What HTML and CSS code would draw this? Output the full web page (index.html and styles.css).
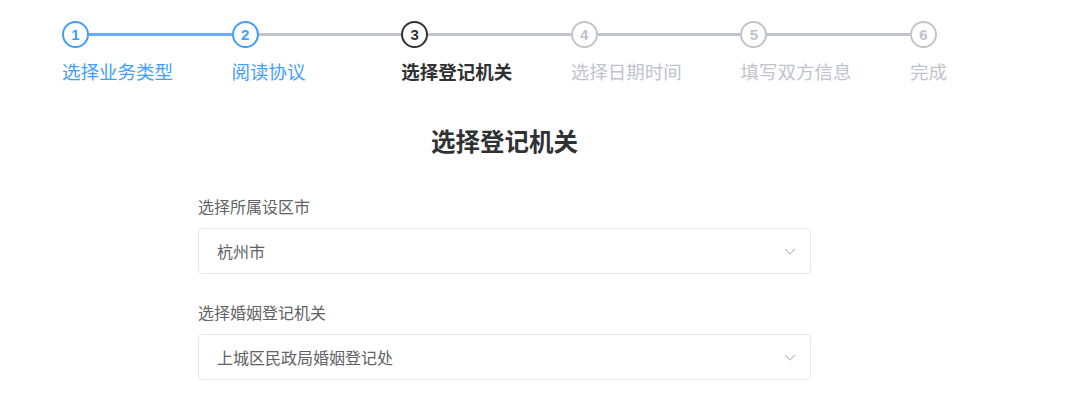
FILE: index.html
```html
<!DOCTYPE html>
<html lang="zh-CN">
    <head>
        <meta charset="UTF-8">
        <meta name="viewport" content="width=device-width, initial-scale=1.0">
        <link rel="stylesheet" href="styles.css">
        <title>选择登记机关</title>
    </head>
    <body>

        <div class="steps">
            <div class="step done">
                <div class="step-head"><span class="step-num">1</span><span class="step-line"></span></div>
                <div class="step-title">选择业务类型</div>
            </div>
            <div class="step done">
                <div class="step-head"><span class="step-num">2</span><span class="step-line"></span></div>
                <div class="step-title">阅读协议</div>
            </div>
            <div class="step current">
                <div class="step-head"><span class="step-num">3</span><span class="step-line"></span></div>
                <div class="step-title">选择登记机关</div>
            </div>
            <div class="step">
                <div class="step-head"><span class="step-num">4</span><span class="step-line"></span></div>
                <div class="step-title">选择日期时间</div>
            </div>
            <div class="step">
                <div class="step-head"><span class="step-num">5</span><span class="step-line"></span></div>
                <div class="step-title">填写双方信息</div>
            </div>
            <div class="step last">
                <div class="step-head"><span class="step-num">6</span></div>
                <div class="step-title">完成</div>
            </div>
        </div>

        <form class="office-form">
            <h2>选择登记机关</h2>

            <label>选择所属设区市</label>
            <div class="select">
                <span>杭州市</span>
                <svg class="arrow" width="12" height="7" viewBox="0 0 12 7"><path d="M1 1 L6 6 L11 1" fill="none" stroke="#c0c4cc" stroke-width="1.2"/></svg>
            </div>

            <label>选择婚姻登记机关</label>
            <div class="select">
                <span>上城区民政局婚姻登记处</span>
                <svg class="arrow" width="12" height="7" viewBox="0 0 12 7"><path d="M1 1 L6 6 L11 1" fill="none" stroke="#c0c4cc" stroke-width="1.2"/></svg>
            </div>
        </form>

    </body>
</html>
```

FILE: styles.css
```css
body {
    font-family: "Noto Sans", "Noto Sans CJK SC", sans-serif;
    background: #fff;
    margin: 0;
}

.steps {
    display: flex;
    padding: 21px 0 0 62px;
}

.step {
    flex: 0 0 169.6px;
}

.step.last {
    flex: 0 0 auto;
}

.step-head {
    display: flex;
    align-items: center;
    height: 26px;
}

.step-num {
    box-sizing: border-box;
    width: 27px;
    height: 27px;
    border: 2px solid #c0c4cc;
    border-radius: 50%;
    color: #c0c4cc;
    font-family: "Liberation Sans", sans-serif;
    font-size: 15px;
    font-weight: bold;
    display: flex;
    align-items: center;
    justify-content: center;
    flex: none;
}

.step-line {
    flex: 1;
    height: 3px;
    background: #c0c4cc;
}

.step-title {
    margin-top: 13px;
    font-size: 18.5px;
    line-height: 24px;
    color: #c0c4cc;
    white-space: nowrap;
}

.step.done .step-num {
    border-color: #409eff;
    color: #409eff;
}

.step.done .step-title {
    color: #409eff;
}

.step.done:first-child .step-line {
    background: #6aacf5;
}

.step.current .step-num {
    border-color: #303133;
    color: #303133;
}

.step.current .step-title {
    color: #303133;
    font-weight: bold;
}

.office-form {
    width: 613px;
    margin: 0 0 0 198px;
}

.office-form h2 {
    margin: 41px 0 36px;
    text-align: center;
    font-size: 24.5px;
    line-height: 34px;
    color: #303133;
}

.office-form label {
    display: block;
    font-size: 16px;
    line-height: 24px;
    color: #606266;
    margin-bottom: 9px;
}

.select {
    box-sizing: border-box;
    height: 46px;
    border: 1px solid #e4e7ed;
    border-radius: 4px;
    padding: 0 14px 0 18px;
    display: flex;
    align-items: center;
    justify-content: space-between;
    font-size: 16px;
    color: #606266;
    margin-bottom: 27px;
}
```
